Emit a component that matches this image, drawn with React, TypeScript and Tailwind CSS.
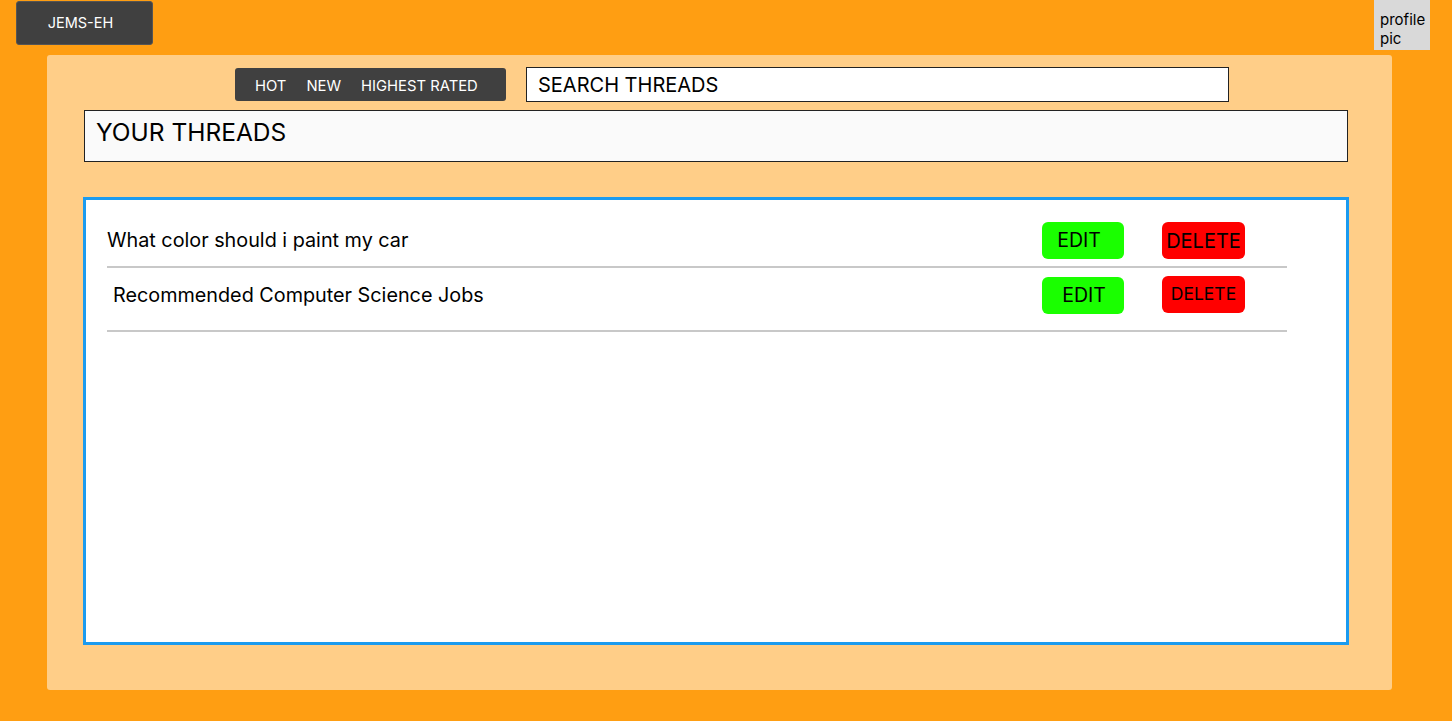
import React from "react";

const threads = [
  { title: "What color should i paint my car", indent: "pl-0", editPad: "pr-[8px]", deleteSize: "text-[20px]", deleteTop: "mt-0" },
  { title: "Recommended Computer Science Jobs", indent: "pl-[6px]", editPad: "pl-[2px]", deleteSize: "text-[17.5px]", deleteTop: "-mt-[2px]" },
];

export default function App() {
  return (
    <div className="h-[721px] w-[1452px] overflow-hidden bg-[#FF9E12] font-['Inter',sans-serif]">
      {/* top bar */}
      <div className="flex h-[55px] items-start justify-between">
        <button className="ml-[16px] mt-[1px] h-[44px] w-[137px] rounded-[3px] border border-[#555] bg-[#404040] pr-[8px] text-[14.5px] text-white">
          JEMS-EH
        </button>
        <div className="mr-[22px] h-[50px] w-[56px] bg-[#D9D9D9] px-[6px] pt-[10px] text-[15px] leading-[19px] text-black">
          profile pic
        </div>
      </div>

      {/* main panel */}
      <div className="ml-[47px] h-[635px] w-[1345px] rounded-[3px] bg-[#FFCE88] pt-[12px]">
        <div className="flex items-center">
          <div className="ml-[188px] flex h-[33px] w-[271px] items-center gap-[20px] rounded-[3px] bg-[#404040] pl-[20px] pt-[4px] text-[14.8px] text-white">
            <span>HOT</span>
            <span>NEW</span>
            <span>HIGHEST RATED</span>
          </div>
          <div className="ml-[20px] flex h-[35px] w-[703px] items-center border-[1.5px] border-[#222] bg-white pl-[11px] text-[20px] text-black">
            SEARCH THREADS
          </div>
        </div>

        <div className="ml-[37px] mt-[8px] h-[52px] w-[1264px] border-[1.5px] border-[#222] bg-[#FAFAFA] pl-[11px] pt-[3px] text-[24.5px] text-black">
          YOUR THREADS
        </div>

        <div className="ml-[36px] mt-[35px] h-[448px] w-[1266px] border-[3px] border-[#1B9BF0] bg-white pl-[21px] pt-[21px]">
          <div className="w-[1180px]">
            {threads.map((t, i) => (
              <div key={i} className={`border-b-2 border-[#C8C8C8] ${i === 0 ? "h-[47px] pb-[8px]" : "mt-[8px] h-[56px] pb-[17px]"}`}>
                <div className="flex h-[38px] items-center">
                  <span className={`flex-1 pt-[2px] text-[19.8px] text-black ${t.indent}`}>{t.title}</span>
                  <button className={`flex h-[37px] w-[82px] items-center justify-center rounded-[6px] bg-[#1AFF00] pt-[1px] text-[19.5px] text-black ${t.editPad}`}>
                    EDIT
                  </button>
                  <button className={`ml-[38px] mr-[42px] flex h-[37px] w-[83px] items-center justify-center rounded-[6px] bg-[#FF0000] pt-[1px] text-black ${t.deleteSize} ${t.deleteTop}`}>
                    DELETE
                  </button>
                </div>
              </div>
            ))}
          </div>
        </div>
      </div>
    </div>
  );
}
